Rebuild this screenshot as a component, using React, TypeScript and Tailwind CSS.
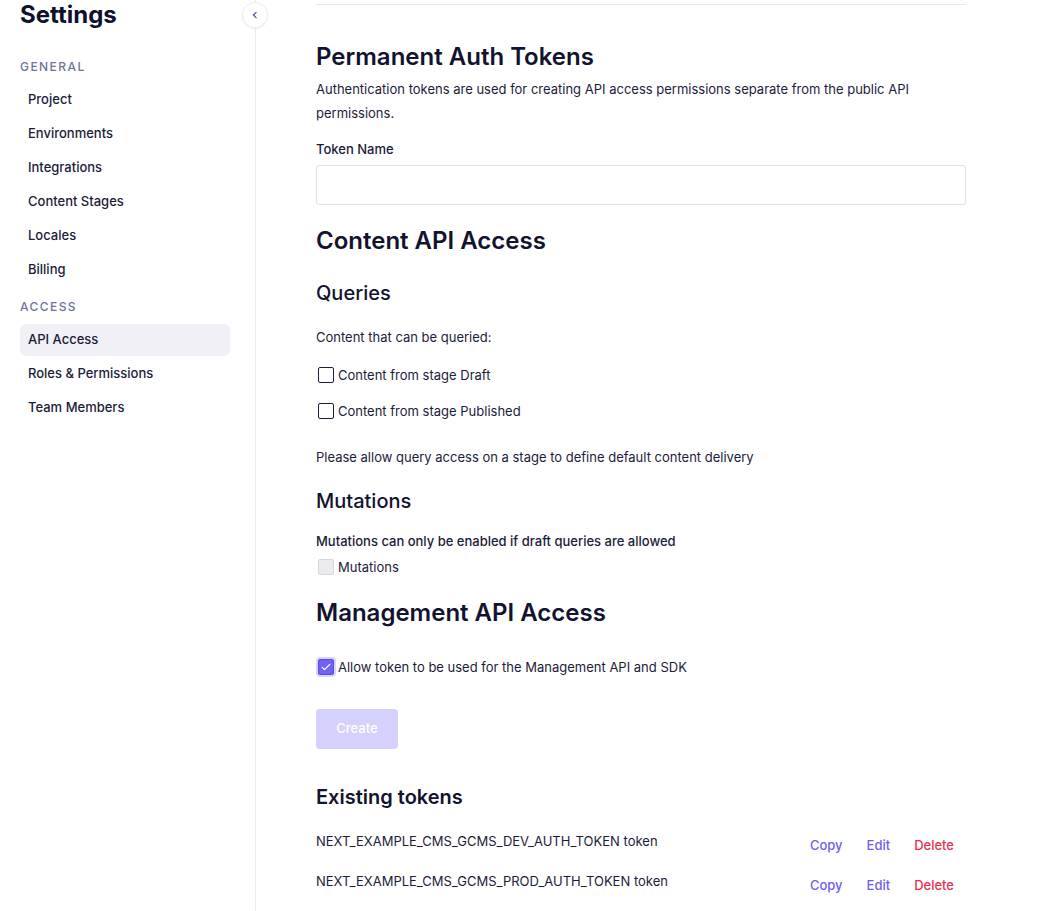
import React from "react";

const generalLinks = ["Project", "Environments", "Integrations", "Content Stages", "Locales", "Billing"];
const accessLinks = ["API Access", "Roles & Permissions", "Team Members"];

const tokens = [
  "NEXT_EXAMPLE_CMS_GCMS_DEV_AUTH_TOKEN token",
  "NEXT_EXAMPLE_CMS_GCMS_PROD_AUTH_TOKEN token",
];

type CheckboxProps = {
  label: string;
  checked?: boolean;
  disabled?: boolean;
};

const Checkbox: React.FC<CheckboxProps> = ({ label, checked, disabled }) => {
  let box = "border-[#1d1e3c] bg-white";
  if (checked) box = "border-[#5a4de0] bg-[#6f62f5] ring-2 ring-[#d9d5fd]";
  if (disabled) box = "border-[#d6d6de] bg-[#ebebef]";
  return (
    <label className="flex h-5 items-center gap-[4px] pl-[2px] text-[13px] leading-5 text-[#1b1c39]">
      <span className={`flex h-4 w-4 items-center justify-center rounded-[2px] border ${box}`}>
        {checked && (
          <svg viewBox="0 0 16 16" className="h-3 w-3" fill="none" stroke="white" strokeWidth="1.8" strokeLinecap="round" strokeLinejoin="round">
            <path d="M3 8.5l3 3 7-7" />
          </svg>
        )}
      </span>
      <span>{label}</span>
    </label>
  );
};

const Sidebar: React.FC = () => (
  <aside className="relative w-[256px] shrink-0 border-r border-[#ececf2] pl-5 pr-[25px]">
    <h1 className="h-[30px] text-[24px] font-bold leading-[30px] text-[#0f1030]">Settings</h1>

    <p className="mt-[29px] text-[12px] font-medium uppercase leading-4 tracking-[0.12em] text-[#6e72a0]">General</p>
    <ul className="mt-[9px] flex flex-col gap-[2px]">
      {generalLinks.map((l) => (
        <li key={l} className="flex h-8 items-center rounded-md px-2 text-[13px] font-medium text-[#1b1c39]">
          {l}
        </li>
      ))}
    </ul>

    <p className="mt-[13px] text-[12px] font-medium uppercase leading-4 tracking-[0.12em] text-[#6e72a0]">Access</p>
    <ul className="mt-[9px] flex flex-col gap-[2px]">
      {accessLinks.map((l) => (
        <li
          key={l}
          className={`flex h-8 items-center rounded-md px-2 text-[13px] font-medium text-[#1b1c39] ${
            l === "API Access" ? "bg-[#f0f0f6]" : ""
          }`}>
          {l}
        </li>
      ))}
    </ul>

    <button
      type="button"
      className="absolute right-[-13px] top-[2px] flex h-[26px] w-[26px] items-center justify-center rounded-full border border-[#efeff4] bg-white shadow-[0_1px_2px_rgba(20,20,60,0.06)]">
      <svg viewBox="0 0 16 16" className="h-3 w-3" fill="none" stroke="#4b4f94" strokeWidth="1.6" strokeLinecap="round" strokeLinejoin="round">
        <path d="M9.5 4.5L6 8l3.5 3.5" />
      </svg>
    </button>
  </aside>
);

export default function App() {
  return (
    <div className="flex min-h-[911px] bg-white font-['Inter',sans-serif] text-[#1b1c39]">
      <Sidebar />

      <main className="ml-[60px] w-[650px]">
        <div className="h-[5px] border-b border-[#e8e8ef]" />

        <h2 className="mt-[36px] text-[24px] font-semibold leading-8 text-[#12132e]">Permanent Auth Tokens</h2>
        <p className="mt-1 text-[13px] leading-6 text-[#1b1c39]">
          Authentication tokens are used for creating API access permissions separate from the public API permissions.
        </p>

        <label className="mt-3 block text-[13px] font-medium leading-6">Token Name</label>
        <input
          type="text"
          className="mt-1 block h-10 w-full rounded-[3px] border border-[#dfe0ee] bg-white px-3 text-[13px] outline-none"
        />

        <h2 className="mt-5 text-[24px] font-semibold leading-8 text-[#12132e]">Content API Access</h2>

        <h3 className="mt-[22px] text-[20px] font-medium leading-7 text-[#12132e]">Queries</h3>
        <p className="mt-5 text-[13px] leading-5">Content that can be queried:</p>
        <div className="mt-[18px] flex flex-col gap-4">
          <Checkbox label="Content from stage Draft" />
          <Checkbox label="Content from stage Published" />
        </div>
        <p className="mt-[26px] text-[13px] leading-5">Please allow query access on a stage to define default content delivery</p>

        <h3 className="mt-5 text-[20px] font-medium leading-7 text-[#12132e]">Mutations</h3>
        <p className="mt-4 text-[13px] font-medium leading-5">Mutations can only be enabled if draft queries are allowed</p>
        <div className="mt-[6px]">
          <Checkbox label="Mutations" disabled />
        </div>

        <h2 className="mt-5 text-[24px] font-semibold leading-8 text-[#12132e]">Management API Access</h2>
        <div className="mt-7">
          <Checkbox label="Allow token to be used for the Management API and SDK" checked />
        </div>

        <button
          type="button"
          className="mt-8 h-10 w-[82px] rounded-[4px] bg-[#d4d1fc] text-[13px] font-medium text-white">
          Create
        </button>

        <h3 className="mt-[34px] text-[20px] font-semibold leading-7 text-[#12132e]">Existing tokens</h3>
        <ul className="mt-5">
          {tokens.map((t) => (
            <li key={t} className="flex h-10 items-start justify-between">
              <span className="text-[13px] leading-5">{t}</span>
              <div className="mt-[4px] flex text-[13px] font-medium leading-5">
                <button type="button" className="px-3 text-[#6d5ff5]">Copy</button>
                <button type="button" className="px-3 text-[#6d5ff5]">Edit</button>
                <button type="button" className="px-3 text-[#e6334f]">Delete</button>
              </div>
            </li>
          ))}
        </ul>
      </main>
    </div>
  );
}
